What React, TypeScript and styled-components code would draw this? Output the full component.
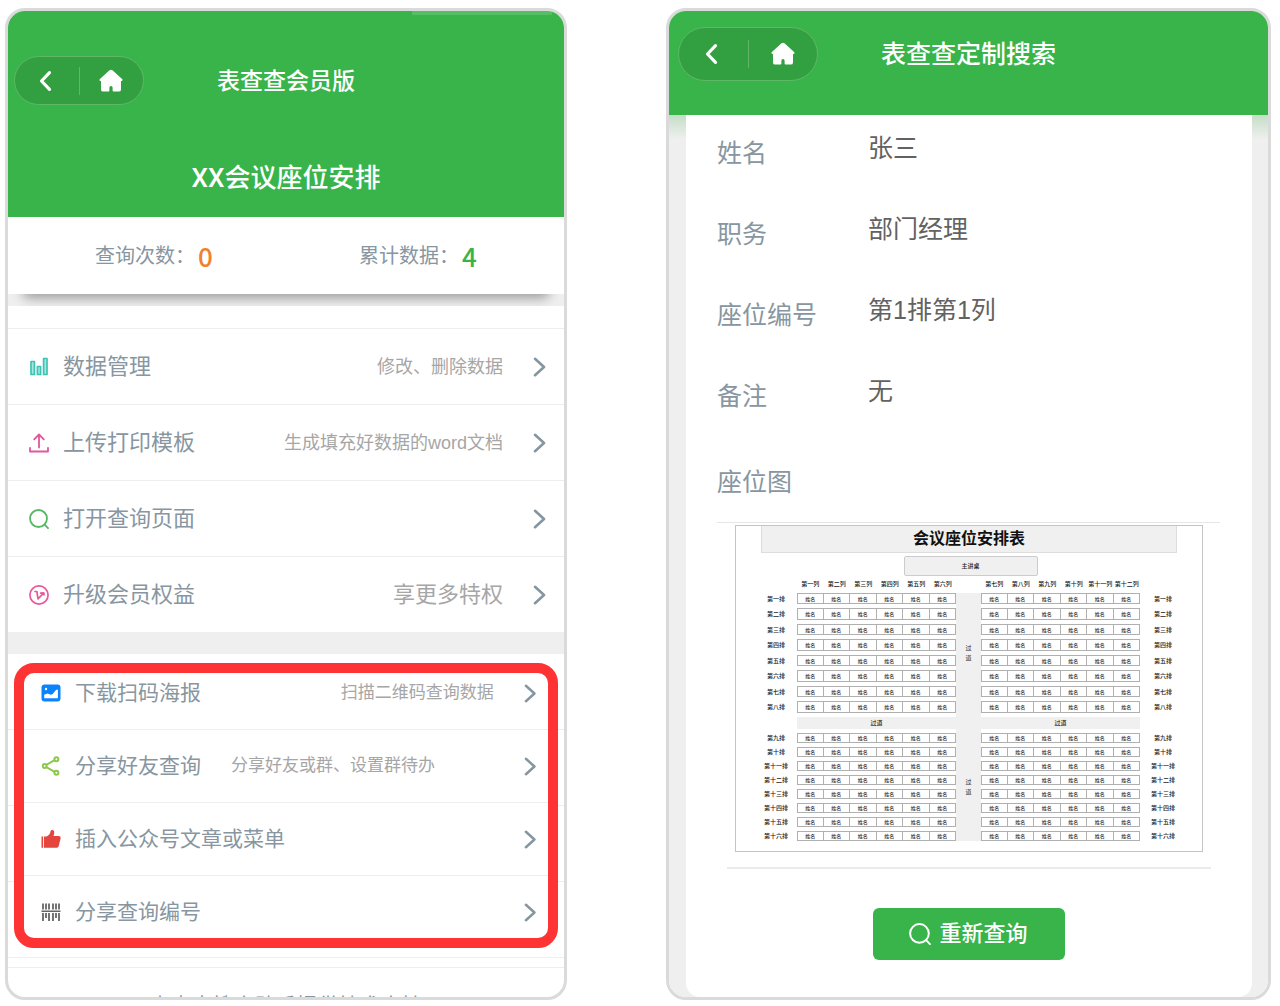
import React from "react";
import styled, { createGlobalStyle } from "styled-components";

const green = "#38b44a";
const slate = "#8796a1";

const GlobalStyle = createGlobalStyle`
  *, *::before, *::after { box-sizing: border-box; }
  body {
    margin: 0;
    background: #fff;
    font-family: "Liberation Sans", "Noto Sans CJK SC", sans-serif;
  }
  h1, h2, h3, p, ul, dl, dd { margin: 0; padding: 0; }
  ul { list-style: none; }
  a { color: inherit; text-decoration: none; }
  button { font: inherit; border: 0; padding: 0; cursor: pointer; }
  svg { display: block; flex: none; }
`;

/* ---------- page ---------- */

const Page = styled.main`
  display: grid;
  grid-template-columns: 562fr 605fr;
  gap: 99px;
  height: 100vh;
  padding: 8px 9px 6px 5px;
`;

const Phone = styled.section`
  display: flex;
  flex-direction: column;
  min-width: 0;
  overflow: hidden;
  border: 3px solid #dadada;
  border-radius: 20px;
  background: #fff;
`;

/* ---------- header ---------- */

const Header = styled.header<{ $top: number; $bottom: number; $glint?: boolean }>`
  flex: none;
  padding: ${(p) => p.$top}px 6px ${(p) => p.$bottom}px;
  color: #fff;
  background: ${(p) =>
      p.$glint
        ? "linear-gradient(rgba(255, 255, 255, 0.14), rgba(255, 255, 255, 0.14)) right 12px top 0 / 140px 4px no-repeat,"
        : ""}
    ${green};
`;

const TitleBar = styled.div`
  display: grid;
  grid-template-columns: 1fr auto 1fr;
  align-items: center;
`;

const Title = styled.h1<{ $size: number }>`
  font-size: ${(p) => p.$size}px;
  line-height: 36px;
  font-weight: 500;
`;

const Subtitle = styled.h2`
  margin-top: 55px;
  font-family: Roboto, "Noto Sans CJK SC", sans-serif;
  font-size: 26px;
  line-height: 36px;
  font-weight: 500;
  text-align: center;
`;

const Capsule = styled.div<{ $large?: boolean }>`
  display: grid;
  grid-template-columns: 1fr 1px 1fr;
  align-items: center;
  width: ${(p) => (p.$large ? 140 : 130)}px;
  height: ${(p) => (p.$large ? 54 : 49)}px;
  margin-left: ${(p) => (p.$large ? 3 : 0)}px;
  border: 1px solid #5fb866;
  border-radius: 27px;
  background: #329f40;
`;

const CapsuleButton = styled.button`
  display: flex;
  align-items: center;
  justify-content: center;
  height: 100%;
  color: #fff;
  background: none;
`;

const CapsuleDivider = styled.span`
  height: 28px;
  background: #62b569;
`;

/* ---------- member page ---------- */

const Stats = styled.div`
  position: relative;
  z-index: 1;
  display: grid;
  grid-template-columns: 1fr 1fr;
  flex: none;
  height: 77px;
  padding: 0 14px;
  background: #fff;
`;

const StatsBand = styled.div`
  flex: none;
  height: 12px;
  overflow: hidden;
  background: #efefef;

  &::before {
    content: "";
    display: block;
    height: 10px;
    margin: -10px 16px 0;
    border-radius: 10px;
    box-shadow: 0 2px 12px 2px rgba(0, 0, 0, 0.36);
  }
`;

const Stat = styled.p`
  display: flex;
  align-items: center;
  justify-content: center;
  gap: 3px;
  color: ${slate};
  font-size: 20px;
  line-height: 30px;
`;

const StatValue = styled.strong<{ $color: string }>`
  color: ${(p) => p.$color};
  font-family: "Noto Sans CJK SC", sans-serif;
  font-size: 26px;
  font-weight: 500;
`;

const Menu = styled.ul`
  flex: none;
  margin-top: 22px;
  border-top: 1px solid #eee;
`;

const MenuItem = styled.li`
  border-bottom: 1px solid #eee;
`;

const MenuLink = styled.a<{ $compact?: boolean }>`
  display: flex;
  align-items: center;
  height: ${(p) => (p.$compact ? 72 : 75)}px;
  padding: ${(p) => (p.$compact ? "0 12px 0 17px" : "0 18px 0 21px")};
  font-size: ${(p) => (p.$compact ? 21 : 22)}px;
  line-height: 32px;
  color: ${slate};
`;

const MenuLabel = styled.span`
  margin-left: 14px;
`;

const MenuHint = styled.span<{ $size: number; $inline?: boolean }>`
  margin-left: ${(p) => (p.$inline ? "30px" : "auto")};
  margin-right: ${(p) => (p.$inline ? "auto" : "0")};
  color: #a6a6a6;
  font-size: ${(p) => p.$size}px;
`;

const ChevronSlot = styled.span`
  margin-left: 30px;

  ${MenuLabel} + & {
    margin-left: auto;
  }
`;

const Separator = styled.div`
  flex: none;
  height: 21px;
  background: #efefef;
`;

const HighlightArea = styled.div`
  flex: none;
  padding: 9px 6px 11px;
  background: repeating-linear-gradient(#fff 0 75px, #eee 75px 76px);
`;

const Highlight = styled.div`
  height: 285px;
  overflow: hidden;
  border: 10px solid #fd3334;
  border-radius: 20px;
  background: #fff;
`;

const HighlightMenu = styled.ul`
  margin-top: -16px;
`;

const Footer = styled.footer`
  flex: none;
  margin-top: 8px;
  padding-top: 22px;
  border-top: 1px solid #eee;
  color: ${slate};
  font-size: 21px;
  line-height: 32px;
  text-align: center;
`;

/* ---------- result page ---------- */

const Body = styled.div`
  display: flex;
  flex: 1;
  min-height: 0;
  padding: 0 16px 0 17px;
  background: linear-gradient(#c4dec6, #efefef 24px);
`;

const Sheet = styled.div`
  display: flex;
  flex-direction: column;
  flex: 1;
  min-width: 0;
  padding: 17px 32px 0 31px;
  border-radius: 0 0 14px 14px;
  background: #fff;
`;

const Fields = styled.dl`
  flex: none;
`;

const Field = styled.div`
  display: grid;
  grid-template-columns: 151px 1fr;
  height: 81px;
  font-size: 25px;
  line-height: 32px;
`;

const FieldName = styled.dt`
  padding-top: 5px;
  color: ${slate};
`;

const FieldValue = styled.dd`
  color: #626262;
`;

const ChartHeading = styled.h2`
  flex: none;
  padding: 10px 0 24px;
  color: ${slate};
  font-size: 25px;
  font-weight: 400;
  line-height: 32px;
  border-bottom: 1px solid #e6e6e6;
`;

const Chart = styled.figure`
  flex: none;
  display: flex;
  flex-direction: column;
  align-items: center;
  height: 327px;
  margin: 2px 17px 0 18px;
  padding: 0 16px 0 19px;
  border: 1px solid #c4c4c4;
`;

const ChartTitle = styled.h3`
  align-self: stretch;
  margin: 0 9px 0 6px;
  border: 1px solid #ddd;
  border-top: 0;
  background: #f0f0f0;
  color: #111;
  font-size: 16px;
  font-weight: 700;
  line-height: 26px;
  text-align: center;
`;

const Stage = styled.p`
  width: 134px;
  margin-top: 3px;
  border: 1px solid #ccc;
  border-radius: 2px;
  background: #f0f0f0;
  color: #222;
  font-size: 6px;
  font-weight: 500;
  line-height: 18px;
  text-align: center;
`;

const SeatTable = styled.table`
  width: 100%;
  margin-top: -1px;
  table-layout: fixed;
  border-spacing: 0 4px;
  color: #222;
  font-size: 6px;
  line-height: 10px;
  text-align: center;

  th, td { padding: 0; }
`;

const LabelCol = styled.col<{ $width: number }>`
  width: ${(p) => p.$width}px;
`;

const HeadCell = styled.th`
  font-weight: 500;
  white-space: nowrap;
`;

const Seat = styled.td<{ $first: boolean; $row: number }>`
  height: ${(p) => (p.$row > 7 ? 10 : p.$row % 2 ? 12 : 11)}px;
  border: 1px solid #b0b0b0;
  border-left: ${(p) => (p.$first ? "1px solid #b0b0b0" : "0")};
  color: #333;
  font-size: 5px;
  font-weight: 500;
  line-height: 8px;
`;

const Aisle = styled.td<{ $joined?: boolean }>`
  background: #f0f0f0;
  box-shadow: ${(p) => (p.$joined ? "0 4px 0 #f0f0f0" : "none")};
  line-height: 10px;
`;

const CrossAisle = styled.td`
  height: 12px;
  background: #f0f0f0;
  font-weight: 500;
`;

const AisleText = styled.span`
  display: block;
  width: 6px;
  margin: 0 auto;
`;

const Rule = styled.hr`
  flex: none;
  align-self: stretch;
  height: 2px;
  margin: 15px 9px 0 10px;
  border: 0;
  background: #ebebeb;
`;

const SearchAgain = styled.button`
  display: flex;
  flex: none;
  align-items: center;
  align-self: center;
  justify-content: center;
  gap: 8px;
  width: 192px;
  height: 52px;
  margin-top: 39px;
  border-radius: 6px;
  background: ${green};
  color: #fff;

  && {
    font-size: 22px;
    font-weight: 500;
    line-height: 32px;
  }
`;

/* ---------- icons ---------- */

const BackIcon = () => (
  <svg width="18" height="22" viewBox="0 0 18 22" fill="none" stroke="currentColor" strokeWidth="3.200" strokeLinecap="round" strokeLinejoin="round" aria-hidden="true">
    <path d="M11.500 2.700 3.500 11l8 8.300" />
  </svg>
);

const HomeIcon = () => (
  <svg width="24" height="24" viewBox="0 0 24 24" fill="currentColor" aria-hidden="true">
    <path d="M10.500 1.300a2.300 2.300 0 0 1 3 0l9.600 8.600c.9.900.5 2-.7 2h-.4v8.500a2.200 2.200 0 0 1-2.200 2.200h-5.200a1 1 0 0 1-1-1v-3a1.600 1.600 0 0 0-3.200 0v3a1 1 0 0 1-1 1H4.200A2.200 2.200 0 0 1 2 20.400v-8.500h-.4c-1.200 0-1.600-1.100-.7-2z" />
  </svg>
);

const ChevronIcon = ({ height }: { height: number }) => (
  <svg width={(height * 13) / 20} height={height} viewBox="0 0 13 20" fill="none" stroke="#8496a1" strokeWidth="2.600" strokeLinecap="round" strokeLinejoin="round" aria-hidden="true">
    <path d="M2 1.800 11 10l-9 8.200" />
  </svg>
);

const ChartIcon = () => (
  <svg width="20" height="20" viewBox="0 0 20 20" fill="#a9e6df" stroke="#3dc3b6" strokeWidth="1.700" strokeLinejoin="round" aria-hidden="true">
    <path d="M2 4.500h3.400v13H2zM8.400 9.500h3.200v8H8.400zM14.600 1.500H18v16h-3.400z" />
  </svg>
);

const UploadIcon = () => (
  <svg width="20" height="20" viewBox="0 0 20 20" fill="none" stroke="#e2569c" strokeWidth="1.800" strokeLinecap="round" strokeLinejoin="round" aria-hidden="true">
    <path d="M10 14.500V1.800M5.200 6.300 10 1.500l4.800 4.800M1 14.800v3.700h18v-3.700" />
  </svg>
);

const SearchIcon = ({ color, size = 20 }: { color: string; size?: number }) => (
  <svg width={size} height={size} viewBox="0 0 20 20" fill="none" stroke={color} strokeWidth="1.800" strokeLinecap="round" aria-hidden="true">
    <circle cx="9.500" cy="9.500" r="8.500" />
    <path d="m15.600 15.600 3.400 3.600" />
  </svg>
);

const VipIcon = () => (
  <svg width="20" height="20" viewBox="0 0 20 20" fill="none" stroke="#e8589c" strokeWidth="1.700" strokeLinecap="round" strokeLinejoin="round" aria-hidden="true">
    <circle cx="10" cy="10" r="9.100" />
    <path d="M6 6.500h1.900L9 13.800l5.600-5.600M11.600 8.200l3.200-.3.200 2" />
  </svg>
);

const PosterIcon = () => (
  <svg width="20" height="20" viewBox="0 0 20 20" aria-hidden="true">
    <rect x="0.500" y="1.500" width="19" height="17" rx="3" fill="#0c83fb" />
    <circle cx="5" cy="6" r="1.200" fill="#fff" />
    <path d="M3.200 15.300v-3.600l3.200-1.100 3.400 1.200 1.900-.7 3.300-4.100 1.900-.6v8.900z" fill="#fff" />
  </svg>
);

const ShareIcon = () => (
  <svg width="20" height="20" viewBox="0 0 20 20" fill="none" stroke="#8cc84b" strokeWidth="2" aria-hidden="true">
    <path d="m5.200 9 8.400-4.800M5.200 11l8.400 4.800" />
    <circle cx="3.700" cy="10" r="1.900" />
    <circle cx="15.400" cy="3.300" r="2" />
    <circle cx="15.400" cy="16.700" r="2" />
  </svg>
);

const LikeIcon = () => (
  <svg width="20" height="20" viewBox="0 0 20 20" fill="#e4463e" aria-hidden="true">
    <path d="M.5 7.500h1.600v11.300H.5zM3 7.500h2.600c2.300-1.200 3.500-2.800 4-5.300.3-1.600 3.400-1.700 3.600.9.100 1.500-.3 2.700-.7 3.900h5.200c1.500 0 2.200 1.100 1.900 2.500l-1.800 7.200c-.4 1.400-1.200 2.100-2.500 2.100H3z" />
  </svg>
);

const BarcodeIcon = () => (
  <svg width="20" height="20" viewBox="0 0 20 20" stroke="#666" aria-hidden="true">
    <path d="M2 1.500v6M5 1.500v6M8 1.500v6M12 1.500v6M15 1.500v6M18 1.500v6" strokeWidth="1.800" />
    <path d="M.5 9.300h19" strokeWidth="1.600" />
    <path d="M2 11v8M5 11v5M8 11v8M12 11v8M15 11v5M18 11v8" strokeWidth="1.800" />
  </svg>
);

/* ---------- content ---------- */

type Entry = {
  icon: React.ReactNode;
  label: string;
  hint?: string;
  hintSize?: number;
  hintInline?: boolean;
};

const mainEntries: Entry[] = [
  { icon: <ChartIcon />, label: "数据管理", hint: "修改、删除数据", hintSize: 18 },
  { icon: <UploadIcon />, label: "上传打印模板", hint: "生成填充好数据的word文档", hintSize: 18 },
  { icon: <SearchIcon color="#55b862" />, label: "打开查询页面" },
  { icon: <VipIcon />, label: "升级会员权益", hint: "享更多特权", hintSize: 22 },
];

const shareEntries: Entry[] = [
  { icon: <PosterIcon />, label: "下载扫码海报", hint: "扫描二维码查询数据", hintSize: 17 },
  { icon: <ShareIcon />, label: "分享好友查询", hint: "分享好友或群、设置群待办", hintSize: 17, hintInline: true },
  { icon: <LikeIcon />, label: "插入公众号文章或菜单" },
  { icon: <BarcodeIcon />, label: "分享查询编号" },
];

const fields = [
  ["姓名", "张三"],
  ["职务", "部门经理"],
  ["座位编号", "第1排第1列"],
  ["备注", "无"],
];

const numerals = ["一", "二", "三", "四", "五", "六", "七", "八", "九", "十", "十一", "十二", "十三", "十四", "十五", "十六"];
const leftSeats = [0, 1, 2, 3, 4, 5];
const rightSeats = [6, 7, 8, 9, 10, 11];

const NavCapsule = ({ large }: { large?: boolean }) => (
  <Capsule $large={large}>
    <CapsuleButton type="button" aria-label="返回"><BackIcon /></CapsuleButton>
    <CapsuleDivider />
    <CapsuleButton type="button" aria-label="首页"><HomeIcon /></CapsuleButton>
  </Capsule>
);

const EntryRow = ({ entry, compact }: { entry: Entry; compact?: boolean }) => (
  <MenuItem>
    <MenuLink href="#" $compact={compact}>
      {entry.icon}
      <MenuLabel>{entry.label}</MenuLabel>
      {entry.hint && (
        <MenuHint $size={entry.hintSize ?? 18} $inline={entry.hintInline}>{entry.hint}</MenuHint>
      )}
      <ChevronSlot><ChevronIcon height={compact ? 19 : 20} /></ChevronSlot>
    </MenuLink>
  </MenuItem>
);

const SeatRow = ({ row }: { row: number }) => (
  <tr>
    <HeadCell scope="row">第{numerals[row]}排</HeadCell>
    {leftSeats.map((n) => <Seat key={n} $first={n === 0} $row={row}>姓名</Seat>)}
    {row % 8 === 0 && (
      <Aisle rowSpan={8} $joined={row === 0}><AisleText>过道</AisleText></Aisle>
    )}
    {rightSeats.map((n) => <Seat key={n} $first={n === 6} $row={row}>姓名</Seat>)}
    <HeadCell>第{numerals[row]}排</HeadCell>
  </tr>
);

const SeatingChart = () => (
  <Chart>
    <ChartTitle>会议座位安排表</ChartTitle>
    <Stage>主讲桌</Stage>
    <SeatTable>
      <colgroup>
        <LabelCol $width={42} />
        {leftSeats.map((n) => <col key={n} />)}
        <LabelCol $width={25} />
        {rightSeats.map((n) => <col key={n} />)}
        <LabelCol $width={46} />
      </colgroup>
      <thead>
        <tr>
          <td />
          {leftSeats.map((n) => <HeadCell key={n} scope="col">第{numerals[n]}列</HeadCell>)}
          <td />
          {rightSeats.map((n) => <HeadCell key={n} scope="col">第{numerals[n]}列</HeadCell>)}
          <td />
        </tr>
      </thead>
      <tbody>
        {numerals.slice(0, 8).map((_, i) => <SeatRow key={i} row={i} />)}
        <tr>
          <td />
          <CrossAisle colSpan={6}>过道</CrossAisle>
          <Aisle $joined />
          <CrossAisle colSpan={6}>过道</CrossAisle>
          <td />
        </tr>
        {numerals.slice(8).map((_, i) => <SeatRow key={i + 8} row={i + 8} />)}
      </tbody>
    </SeatTable>
  </Chart>
);

export default function App() {
  return (
    <>
      <GlobalStyle />
      <Page lang="zh-CN">
        <Phone>
          <Header $top={45} $bottom={21} $glint>
            <TitleBar>
              <NavCapsule />
              <Title $size={23}>表查查会员版</Title>
            </TitleBar>
            <Subtitle>XX会议座位安排</Subtitle>
          </Header>
          <Stats>
            <Stat>查询次数：<StatValue $color="#f0812f">0</StatValue></Stat>
            <Stat>累计数据：<StatValue $color={green}>4</StatValue></Stat>
          </Stats>
          <StatsBand />
          <Menu>
            {mainEntries.map((e) => <EntryRow key={e.label} entry={e} />)}
          </Menu>
          <Separator />
          <HighlightArea>
            <Highlight>
              <HighlightMenu>
                {shareEntries.map((e) => <EntryRow key={e.label} entry={e} compact />)}
              </HighlightMenu>
            </Highlight>
          </HighlightArea>
          <Footer>表查查搜索助手提供技术支持</Footer>
        </Phone>

        <Phone>
          <Header $top={16} $bottom={34}>
            <TitleBar>
              <NavCapsule large />
              <Title $size={25}>表查查定制搜索</Title>
            </TitleBar>
          </Header>
          <Body>
            <Sheet>
              <Fields>
                {fields.map(([name, value]) => (
                  <Field key={name}>
                    <FieldName>{name}</FieldName>
                    <FieldValue>{value}</FieldValue>
                  </Field>
                ))}
              </Fields>
              <ChartHeading>座位图</ChartHeading>
              <SeatingChart />
              <Rule />
              <SearchAgain type="button">
                <SearchIcon color="#fff" size={22} />
                重新查询
              </SearchAgain>
            </Sheet>
          </Body>
        </Phone>
      </Page>
    </>
  );
}
